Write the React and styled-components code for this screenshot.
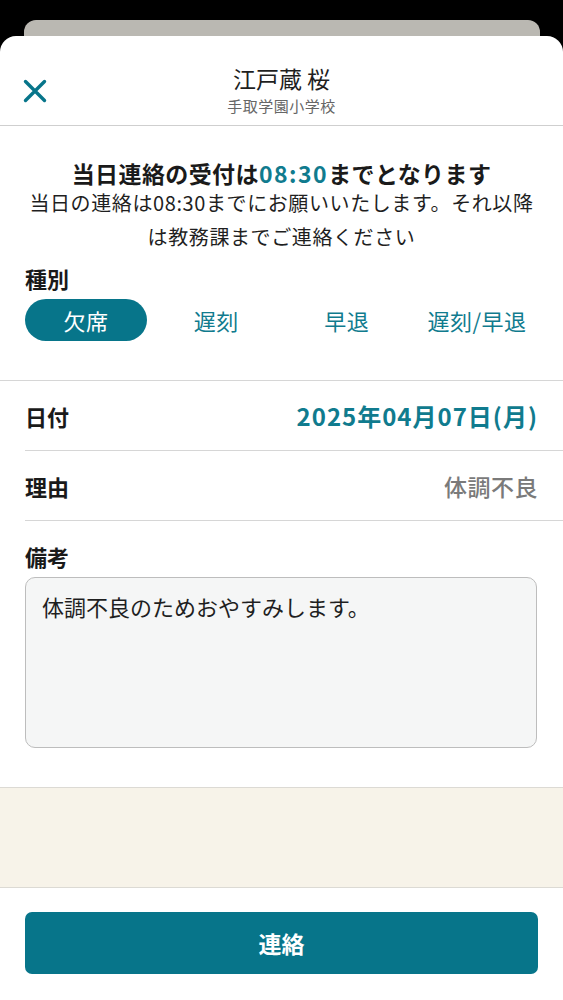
import React from "react";
import styled, { createGlobalStyle } from "styled-components";

const TEAL = "#07758a";
const TEAL_TEXT = "#107b8e";

const Global = createGlobalStyle`
  html, body { margin: 0; padding: 0; background: #000; }
  body { font-family: "Noto Sans CJK JP", "Noto Sans", sans-serif; color: #1c1c1c; }
  * { box-sizing: border-box; }
`;

const Screen = styled.div`
  min-height: 100vh;
  display: flex;
  flex-direction: column;
  padding-top: 20px;
`;

const BackCard = styled.div`
  height: 16px;
  margin: 0 23px 0 24px;
  background: #bab8b2;
  border-radius: 12px 12px 0 0;
`;

const Sheet = styled.div`
  flex: 1;
  background: #fff;
  border-radius: 16px 16px 0 0;
  display: flex;
  flex-direction: column;
`;

const Header = styled.header`
  display: grid;
  grid-template-columns: 1fr auto 1fr;
  padding: 27px 0 9px;
  border-bottom: 1px solid #cfcfcf;
`;

const CloseButton = styled.button`
  justify-self: start;
  align-self: start;
  margin: 16px 0 0 23px;
  width: 24px;
  height: 24px;
  padding: 0;
  border: none;
  background: none;
  color: ${TEAL};
  display: flex;
`;

const HeaderText = styled.div`
  display: flex;
  flex-direction: column;
  align-items: center;
`;

const Name = styled.div`
  font-size: 23px;
  line-height: 30px;
  color: #1f1f1f;
`;

const School = styled.div`
  margin-top: 3px;
  font-size: 15px;
  line-height: 20px;
  letter-spacing: 0.5px;
  color: #666;
`;

const NoticeSection = styled.section`
  padding: 31px 25px 39px;
  border-bottom: 1px solid #d6d6d6;
`;

const NoticeTitle = styled.h2`
  margin: 0;
  text-align: center;
  font-size: 23px;
  line-height: 32px;
  font-weight: 700;
  letter-spacing: 0.4px;
  color: #1a1a1a;
`;

const Accent = styled.span`
  color: ${TEAL_TEXT};
  letter-spacing: 1.5px;
`;

const NoticeBody = styled.p`
  margin: -3px 0 0;
  text-align: center;
  font-size: 20px;
  line-height: 34px;
  letter-spacing: 0.6px;
  color: #1f1f1f;
  white-space: nowrap;
`;

const FieldLabel = styled.div`
  font-size: 22px;
  line-height: 30px;
  font-weight: 700;
  color: #1a1a1a;
  margin-top: ${(p) => p.$mt || 0}px;
`;

const SegmentGroup = styled.div`
  margin-top: 6px;
  display: grid;
  grid-template-columns: repeat(4, 1fr);
  column-gap: 8.5px;
`;

const Segment = styled.button`
  height: 42px;
  border: none;
  border-radius: 21px;
  padding: 0;
  font-family: inherit;
  font-size: 22px;
  letter-spacing: 0.5px;
  background: ${(p) => (p.$active ? TEAL : "transparent")};
  color: ${(p) => (p.$active ? "#fff" : TEAL_TEXT)};
`;

const Row = styled.div`
  margin-left: 25px;
  padding-right: 25px;
  height: 70px;
  display: flex;
  align-items: center;
  justify-content: space-between;
  border-bottom: 1px solid #d6d6d6;
`;

const RowValue = styled.div`
  font-size: ${(p) => (p.$accent ? 24 : 23)}px;
  font-weight: ${(p) => (p.$accent ? 700 : 500)};
  letter-spacing: ${(p) => (p.$accent ? 1 : 0.5)}px;
  color: ${(p) => (p.$accent ? TEAL_TEXT : "#7a7a7a")};
`;

const NoteSection = styled.section`
  padding: 20px 26px 39px 25px;
`;

const NoteArea = styled.textarea`
  display: block;
  width: 100%;
  height: 171px;
  margin-top: 6px;
  padding: 12px 16px;
  border: 1.5px solid #bdbdbd;
  border-radius: 10px;
  background: #f5f6f6;
  font-family: inherit;
  font-size: 22px;
  line-height: 32px;
  color: #1f1f1f;
  resize: none;
  outline: none;
`;

const Spacer = styled.div`
  height: 101px;
  background: #f7f3e9;
  border-top: 1px solid #dcdad4;
  border-bottom: 1px solid #dcdad4;
`;

const Footer = styled.footer`
  padding: 24px 25px 26px;
`;

const SubmitButton = styled.button`
  width: 100%;
  height: 62px;
  border: none;
  border-radius: 7px;
  background: ${TEAL};
  color: #fff;
  font-family: inherit;
  font-size: 23px;
  font-weight: 700;
`;

const kinds = ["欠席", "遅刻", "早退", "遅刻/早退"];

export default function App() {
  return (
    <>
      <Global />
      <Screen>
        <BackCard />
        <Sheet>
          <Header>
            <CloseButton aria-label="閉じる">
              <svg width="24" height="24" viewBox="0 0 24 24" fill="none">
                <path
                  d="M2.5 2.5L21.5 21.5M21.5 2.5L2.5 21.5"
                  stroke="currentColor"
                  strokeWidth="3.4"
                  strokeLinecap="round"
                />
              </svg>
            </CloseButton>
            <HeaderText>
              <Name>江戸蔵 桜</Name>
              <School>手取学園小学校</School>
            </HeaderText>
            <div />
          </Header>

          <NoticeSection>
            <NoticeTitle>
              当日連絡の受付は<Accent>08:30</Accent>までとなります
            </NoticeTitle>
            <NoticeBody>
              当日の連絡は08:30までにお願いいたします。それ以降
              <br />
              は教務課までご連絡ください
            </NoticeBody>
            <FieldLabel $mt={9}>種別</FieldLabel>
            <SegmentGroup>
              {kinds.map((k, i) => (
                <Segment key={k} $active={i === 0}>
                  {k}
                </Segment>
              ))}
            </SegmentGroup>
          </NoticeSection>

          <Row>
            <FieldLabel>日付</FieldLabel>
            <RowValue $accent>2025年04月07日(月)</RowValue>
          </Row>
          <Row>
            <FieldLabel>理由</FieldLabel>
            <RowValue>体調不良</RowValue>
          </Row>

          <NoteSection>
            <FieldLabel>備考</FieldLabel>
            <NoteArea defaultValue="体調不良のためおやすみします。" />
          </NoteSection>

          <Spacer />

          <Footer>
            <SubmitButton>連絡</SubmitButton>
          </Footer>
        </Sheet>
      </Screen>
    </>
  );
}
